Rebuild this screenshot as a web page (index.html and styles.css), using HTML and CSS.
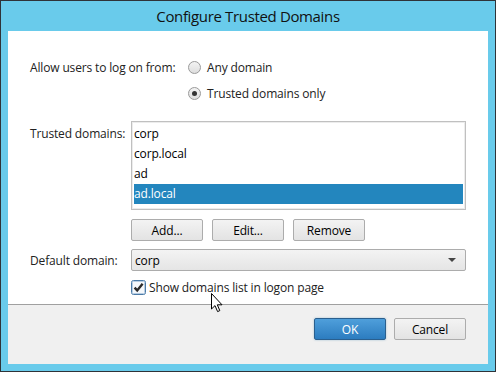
FILE: index.html
```html
<!DOCTYPE html>
<html lang="en">
<head>
    <meta charset="UTF-8">
    <meta name="viewport" content="width=device-width, initial-scale=1.0">
    <title>Configure Trusted Domains</title>
    <link rel="stylesheet" href="styles.css">
</head>
<body>
<div class="window">
    <div class="titlebar">Configure Trusted Domains</div>
    <div class="client">
        <div class="content">
            <div class="row radioRow">
                <span class="label wideLabel">Allow users to log on from:</span>
                <span class="radio"></span>
                <span class="optionText">Any domain</span>
            </div>
            <div class="row radioRow second">
                <span class="label wideLabel"></span>
                <span class="radio checked"></span>
                <span class="optionText">Trusted domains only</span>
            </div>

            <div class="row listRow">
                <span class="label topLabel">Trusted domains:</span>
                <div class="listbox">
                    <div class="item">corp</div>
                    <div class="item">corp.local</div>
                    <div class="item">ad</div>
                    <div class="item selected">ad.local</div>
                </div>
            </div>

            <div class="row buttonRow">
                <span class="label"></span>
                <button class="button">Add...</button>
                <button class="button">Edit...</button>
                <button class="button">Remove</button>
            </div>

            <div class="row comboRow">
                <span class="label">Default domain:</span>
                <div class="combo">
                    <span>corp</span>
                    <span class="arrow"></span>
                </div>
            </div>

            <div class="row checkRow">
                <span class="label"></span>
                <svg class="checkbox" viewBox="0 0 15 15" xmlns="http://www.w3.org/2000/svg">
                    <rect x="0.5" y="0.5" width="14" height="14" rx="2" fill="#cfe0f0" stroke="#4a7aa6"/>
                    <rect x="1.5" y="1.5" width="12" height="12" rx="1" fill="#f5f8fb" stroke="#b7cde3"/>
                    <path d="M3.6 7.6 L6.2 10.4 L11.6 3.8" fill="none" stroke="#2a2a2a" stroke-width="2.4"/>
                </svg>
                <span class="optionText">Show domains list in logon page</span>
                <svg class="cursor" viewBox="0 0 12 20" xmlns="http://www.w3.org/2000/svg">
                    <path d="M0.5 0.5 L0.5 16 L4 12.6 L6.6 18.6 L8.8 17.6 L6.3 11.8 L11 11.8 Z" fill="#fff" stroke="#000" stroke-width="1"/>
                </svg>
            </div>
        </div>
        <div class="footer">
            <button class="button default">OK</button>
            <button class="button">Cancel</button>
        </div>
    </div>
</div>
</body>
</html>
```

FILE: styles.css
```css
body {
    margin: 0;
    padding: 0;
    font-family: "Open Sans", "Noto Sans", sans-serif;
    font-size: 12px;
    letter-spacing: -0.15px;
    color: #222;
}

.window {
    width: 496px;
    height: 372px;
    box-sizing: border-box;
    border: 1px solid #2f3338;
    background: #69cbeb;
    padding: 0 7px 7px;
    display: flex;
    flex-direction: column;
}

.titlebar {
    height: 30px;
    line-height: 31px;
    text-align: center;
    font-size: 15px;
    letter-spacing: -0.35px;
    color: #111;
}

.client {
    flex: 1;
    background: #fff;
    display: flex;
    flex-direction: column;
}

.content {
    flex: 1;
    padding: 26px 0 0 22px;
    position: relative;
}

.row {
    display: flex;
    align-items: center;
}

.label {
    width: 101px;
    flex-shrink: 0;
}

.wideLabel {
    width: 158px;
}

/* Radio buttons */
.radioRow {
    height: 20px;
}

.radioRow.second {
    margin-top: 6px;
}

.radio {
    width: 11px;
    height: 11px;
    border: 1px solid #9a9a9a;
    border-radius: 50%;
    background: linear-gradient(#f3f3f3, #dedede);
    margin-right: 6px;
    display: flex;
    align-items: center;
    justify-content: center;
}

.radio.checked::after {
    content: '';
    width: 5px;
    height: 5px;
    border-radius: 50%;
    background: #333;
}

/* List box */
.listRow {
    margin-top: 18px;
    align-items: flex-start;
}

.topLabel {
    line-height: 20px;
    margin-top: 3px;
}

.listbox {
    width: 335px;
    height: 89px;
    box-sizing: border-box;
    border: 1px solid #c0c0c0;
    box-shadow: inset 0 0 0 1px #ececec;
    padding: 2px;
}

.item {
    height: 20px;
    line-height: 20px;
    color: #000;
}

.item.selected {
    background: #2386be;
    color: #fff;
}

/* Buttons */
.buttonRow {
    margin-top: 9px;
    gap: 9px;
}

.buttonRow .label {
    margin-right: -9px;
}

.button {
    width: 72px;
    height: 22px;
    box-sizing: border-box;
    border: 1px solid #acacac;
    border-radius: 2px;
    background: linear-gradient(#f3f3f3, #e3e3e3);
    font-family: inherit;
    font-size: 12px;
    letter-spacing: inherit;
    color: #000;
    padding: 0;
}

.button.default {
    border-color: #2a5f8e;
    background: linear-gradient(#4f9fdb, #2c7cbf);
    color: #fff;
    box-shadow: 0 0 2px rgba(60, 127, 177, 0.5);
}

/* Combo box */
.comboRow {
    margin-top: 8px;
}

.combo {
    width: 335px;
    height: 22px;
    box-sizing: border-box;
    border: 1px solid #acacac;
    border-radius: 2px;
    background: linear-gradient(#f3f3f3, #e5e5e5);
    display: flex;
    align-items: center;
    justify-content: space-between;
    padding: 0 9px 0 3px;
    color: #000;
}

.arrow {
    width: 0;
    height: 0;
    border-left: 4px solid transparent;
    border-right: 4px solid transparent;
    border-top: 4px solid #444;
}

/* Checkbox */
.checkRow {
    margin-top: 8px;
    height: 16px;
}

.checkbox {
    width: 15px;
    height: 15px;
    margin-right: 3px;
}

.cursor {
    position: absolute;
    left: 203px;
    top: 262px;
    width: 12px;
    height: 20px;
}

/* Footer */
.footer {
    height: 46px;
    border-top: 1px solid #a0a0a0;
    background: #f0f0f0;
    display: flex;
    justify-content: flex-end;
    align-items: flex-start;
    gap: 8px;
    padding: 13px 22px 0 0;
}
```
